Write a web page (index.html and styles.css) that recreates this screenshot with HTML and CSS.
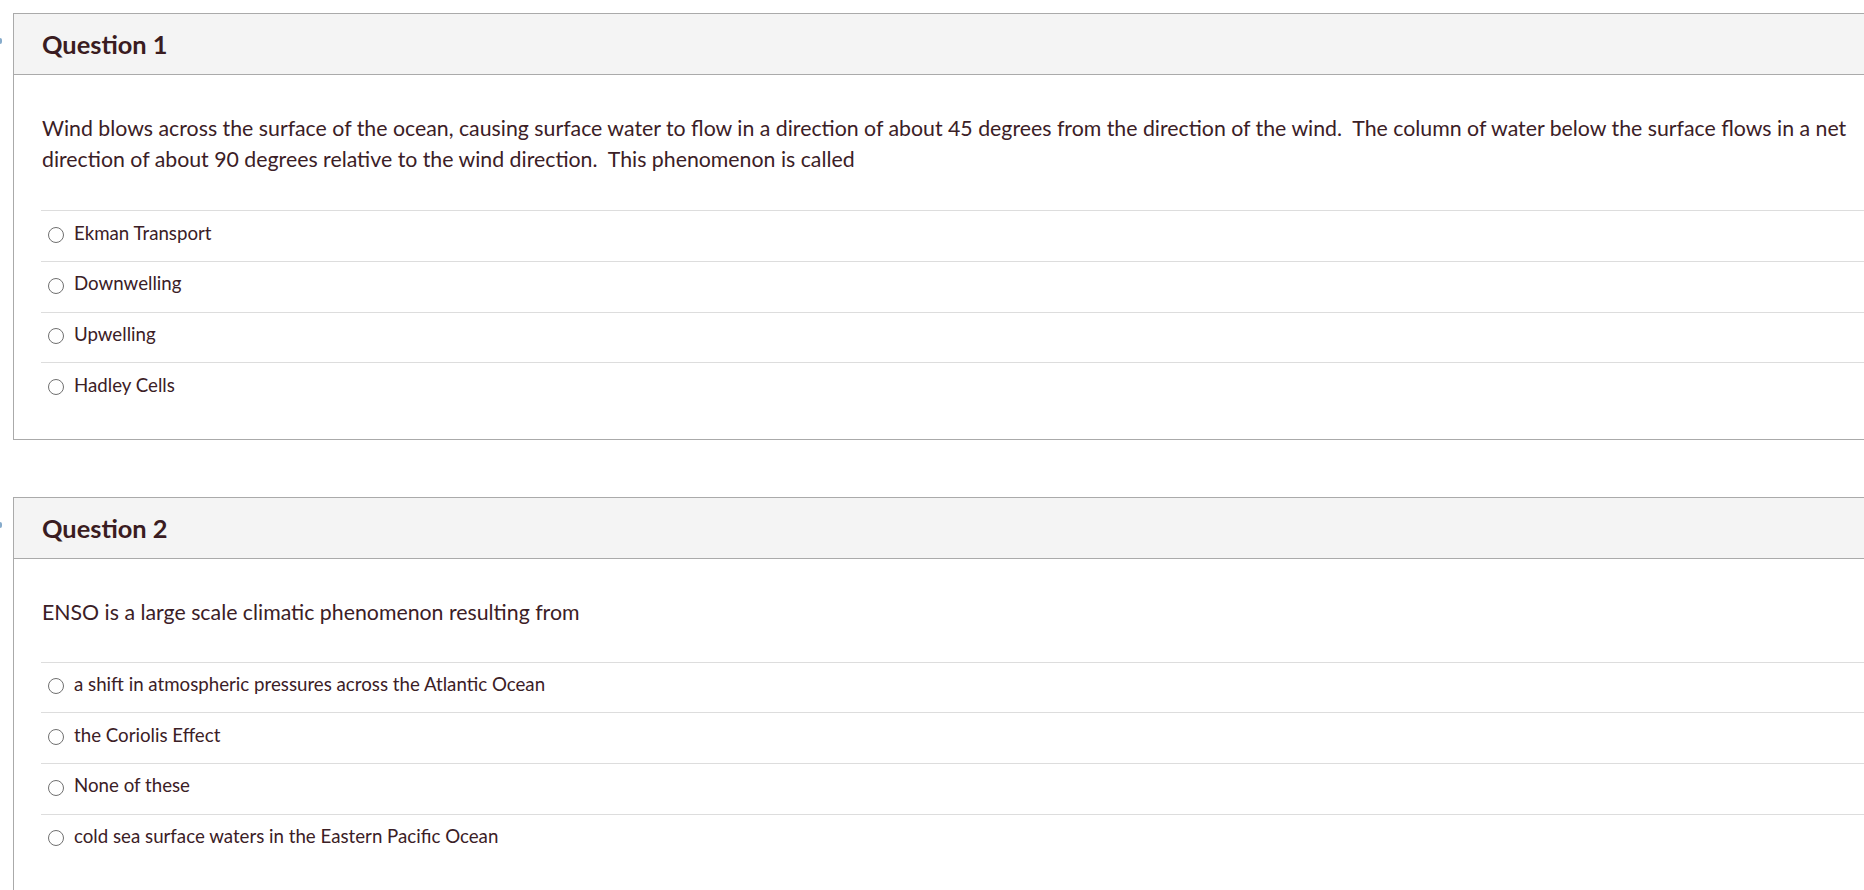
FILE: index.html
```html
<!DOCTYPE html>
<html lang="en">
<head>
<meta charset="utf-8">
<title>Quiz</title>
<link rel="stylesheet" href="styles.css">
</head>
<body>
<div class="quiz">
  <section class="question">
    <span class="flag"></span>
    <div class="q-header"><h2 class="q-title">Question 1</h2></div>
    <div class="q-body">
      <p class="q-text">Wind blows across the surface of the ocean, causing surface water to flow in a direction of about 45 degrees from the direction of the wind.&nbsp; The column of water below the surface flows in a net<br>direction of about 90 degrees relative to the wind direction.&nbsp; This phenomenon is called</p>
      <div class="answers">
        <label class="answer"><span class="radio"></span><span class="label">Ekman Transport</span></label>
        <label class="answer"><span class="radio"></span><span class="label">Downwelling</span></label>
        <label class="answer"><span class="radio"></span><span class="label">Upwelling</span></label>
        <label class="answer"><span class="radio"></span><span class="label">Hadley Cells</span></label>
      </div>
    </div>
  </section>
  <section class="question">
    <span class="flag"></span>
    <div class="q-header"><h2 class="q-title">Question 2</h2></div>
    <div class="q-body">
      <p class="q-text q-text-short">ENSO is a large scale climatic phenomenon resulting from</p>
      <div class="answers">
        <label class="answer"><span class="radio"></span><span class="label">a shift in atmospheric pressures across the Atlantic Ocean</span></label>
        <label class="answer"><span class="radio"></span><span class="label">the Coriolis Effect</span></label>
        <label class="answer"><span class="radio"></span><span class="label">None of these</span></label>
        <label class="answer"><span class="radio"></span><span class="label">cold sea surface waters in the Eastern Pacific Ocean</span></label>
      </div>
    </div>
  </section>
</div>
</body>
</html>
```
FILE: styles.css
```css
html, body {
  margin: 0;
  padding: 0;
  overflow: hidden;
  background: #ffffff;
}
body {
  font-family: Lato, "Open Sans", "Liberation Sans", sans-serif;
  color: #3b2026;
}
.quiz {
  display: flex;
  flex-direction: column;
  gap: 57px;
  padding: 13px 0 0 13px;
}
.question {
  position: relative;
  width: 1900px;
  flex: none;
  border: 1px solid #aaaaaa;
  background: #ffffff;
}
.flag {
  position: absolute;
  left: -14px;
  top: 24px;
  width: 2px;
  height: 6px;
  border-radius: 0 3px 3px 0;
  background: #86abcb;
}
.q-header {
  height: 60px;
  display: flex;
  align-items: center;
  padding-left: 28px;
  background: #f4f4f4;
  border-bottom: 1px solid #aaaaaa;
}
.q-title {
  margin: 0;
  font-size: 25.4px;
  font-weight: 700;
  color: #3a1c21;
}
.q-body {
  padding: 38px 0 26px 27px;
}
.q-text {
  margin: 0 0 36px 1px;
  font-size: 21.3px;
  line-height: 30.6px;
  white-space: nowrap;
}
.q-text-short {
  margin-bottom: 34px;
}
.answers {
  display: flex;
  flex-direction: column;
}
.answer {
  display: flex;
  align-items: center;
  gap: 10px;
  height: 43.7px;
  padding: 0 0 6px 7px;
  border-top: 1px solid #dddddd;
  font-size: 18.7px;
}
.radio {
  flex: none;
  width: 14px;
  height: 14px;
  margin-top: 4px;
  border: 1px solid #707070;
  border-radius: 50%;
  background: #ffffff;
}
.label {
  line-height: 27px;
}
```
